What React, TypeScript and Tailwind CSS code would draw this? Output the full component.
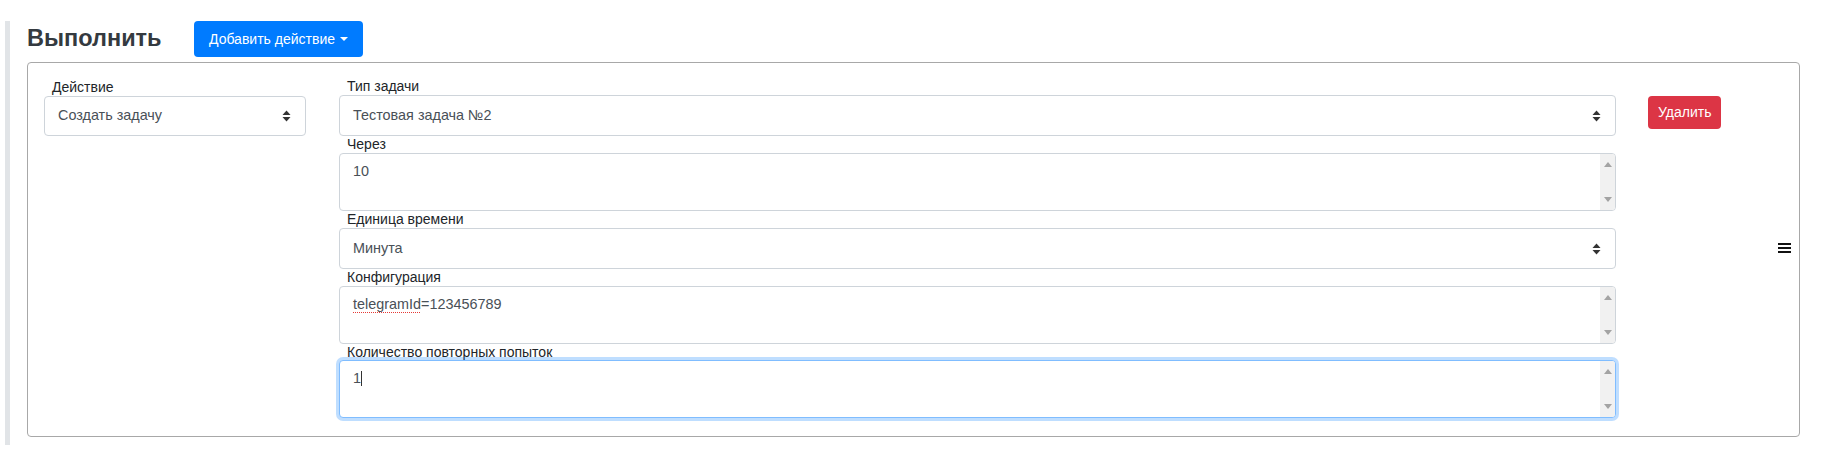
import React from "react";

const font = { fontFamily: '"Liberation Sans", Arial, sans-serif' };

function SelectArrows() {
  return (
    <svg width="9" height="12" viewBox="0 0 9 12" className="shrink-0">
      <path d="M4.5 0.5 L8.5 5 L0.5 5 Z" fill="#333" />
      <path d="M0.5 7 L8.5 7 L4.5 11.5 Z" fill="#333" />
    </svg>
  );
}

function Select({ value, className = "" }: { value: string; className?: string }) {
  return (
    <div
      className={`flex items-center justify-between h-[40px] border border-[#ced4da] rounded-[4px] bg-white pl-[13px] pr-[14px] text-[14.4px] text-[#495057] ${className}`}
    >
      <span>{value}</span>
      <SelectArrows />
    </div>
  );
}

function Scrollbar() {
  return (
    <div className="absolute right-0 top-0 bottom-0 w-[15px] bg-[#f1f1f1] flex flex-col items-center justify-between py-[8px]">
      <svg width="8" height="5" viewBox="0 0 8 5">
        <path d="M4 0 L8 5 L0 5 Z" fill="#a3a3a3" />
      </svg>
      <svg width="8" height="5" viewBox="0 0 8 5">
        <path d="M0 0 L8 0 L4 5 Z" fill="#a3a3a3" />
      </svg>
    </div>
  );
}

function TextArea({ children, focused = false }: { children: React.ReactNode; focused?: boolean }) {
  return (
    <div
      className={`relative h-[58px] rounded-[4px] bg-white pl-[13px] pt-[5px] text-[14.4px] leading-[19px] text-[#495057] overflow-hidden ${
        focused
          ? "border border-[#80bdff] shadow-[0_0_0_3px_rgba(0,123,255,0.25)]"
          : "border border-[#ced4da]"
      }`}
    >
      <div className="pt-[3px]">{children}</div>
      <Scrollbar />
    </div>
  );
}

function Label({ children }: { children: React.ReactNode }) {
  return <div className="h-[17px] leading-[17px] pl-[8px] text-[14px] text-[#212529]">{children}</div>;
}

export default function App() {
  return (
    <div style={font} className="w-[1821px] h-[452px] bg-white pt-[16px] pl-[5px] pr-[21px] overflow-hidden">
      <div className="border-l-[5px] border-[#e1e4e7] pl-[17px] pb-[8px]">
        <div className="flex items-center h-[36px] mt-[5px] mb-[5px]">
          <h2 className="w-[167px] text-[23.5px] font-bold text-[#343a40] leading-none">Выполнить</h2>
          <button className="h-[36px] flex items-center rounded-[4px] bg-[#007bff] text-white text-[14px] pl-[15px] pr-[15px]">
            Добавить действие
            <span className="ml-[5px] inline-block w-0 h-0 border-l-[4px] border-r-[4px] border-t-[4px] border-l-transparent border-r-transparent border-t-white" />
          </button>
        </div>
        <div className="relative flex border border-[#a8a8a8] rounded-[4px] h-[375px] pt-[16px] pl-[16px]">
          <div className="w-[262px] shrink-0">
            <Label>Действие</Label>
            <Select value="Создать задачу" />
          </div>
          <div className="w-[1277px] shrink-0 ml-[33px] -mt-[1px]">
            <Label>Тип задачи</Label>
            <Select value="Тестовая задача №2" className="h-[41px]" />
            <Label>Через</Label>
            <TextArea>10</TextArea>
            <Label>Единица времени</Label>
            <Select value="Минута" className="h-[41px]" />
            <Label>Конфигурация</Label>
            <TextArea>
              <span className="underline decoration-dotted decoration-[#e53935] decoration-1 underline-offset-[3px]">
                telegramId
              </span>
              =123456789
            </TextArea>
            <div className="h-[16px] leading-[16px] pl-[8px] text-[14px] text-[#212529]">Количество повторных попыток</div>
            <TextArea focused>
              <span>1</span>
              <span className="inline-block w-[1px] h-[15px] bg-[#333] align-[-3px]" />
            </TextArea>
          </div>
          <div className="ml-[32px] pt-[17px]">
            <button className="h-[33px] px-[10px] rounded-[4px] bg-[#dc3545] text-white text-[14px]">Удалить</button>
          </div>
          <div className="absolute right-[8px] top-[180px] flex flex-col gap-[2px] w-[13px]">
            <div className="h-[2px] bg-[#111]" />
            <div className="h-[2px] bg-[#111]" />
            <div className="h-[2px] bg-[#111]" />
          </div>
        </div>
      </div>
    </div>
  );
}
